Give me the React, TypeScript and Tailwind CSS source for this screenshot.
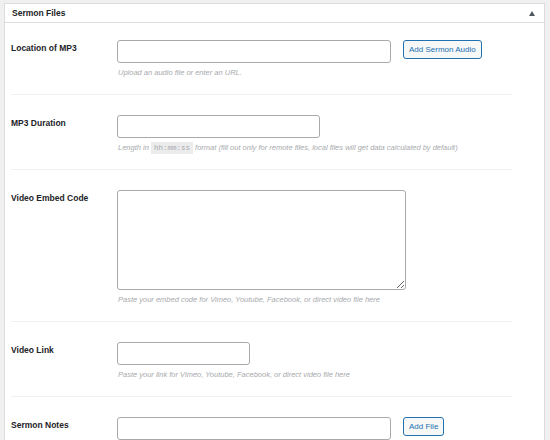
import React from "react";

type Field = {
  label: string;
  kind: "input" | "textarea";
  width: string;
  button?: string;
  help: React.ReactNode;
};

const fields: Field[] = [
  {
    label: "Location of MP3",
    kind: "input",
    width: "w-[274px]",
    button: "Add Sermon Audio",
    help: "Upload an audio file or enter an URL.",
  },
  {
    label: "MP3 Duration",
    kind: "input",
    width: "w-[203px]",
    help: (
      <>
        Length in{" "}
        <code className="not-italic bg-[#ececed] px-[3px] py-[2px] font-['Liberation_Mono',monospace] text-[7.5px]">
          hh:mm:ss
        </code>{" "}
        format (fill out only for remote files, local files will get data calculated by default)
      </>
    ),
  },
  {
    label: "Video Embed Code",
    kind: "textarea",
    width: "w-[289px]",
    help: "Paste your embed code for Vimeo, Youtube, Facebook, or direct video file here",
  },
  {
    label: "Video Link",
    kind: "input",
    width: "w-[133px]",
    help: "Paste your link for Vimeo, Youtube, Facebook, or direct video file here",
  },
  {
    label: "Sermon Notes",
    kind: "input",
    width: "w-[274px]",
    button: "Add File",
    help: "",
  },
];

const FieldRow = ({ field, first, last }: { field: Field; first: boolean; last: boolean }) => {
  return (
    <div
      className={`flex ${first ? "pt-[17px]" : "pt-[20px]"} ${last ? "" : "pb-[16px] border-b border-[#f0f0f1]"}`}
    >
      <div className="w-[106px] shrink-0 pt-[3px] text-[8.5px] leading-[11px] font-bold text-[#1d2327]">
        {field.label}
      </div>
      <div className="flex flex-col">
        <div className="flex items-start">
          {field.kind === "textarea" ? (
            <textarea
              className={`${field.width} h-[100px] rounded-[3px] border border-[#a7aaad] bg-white outline-none block`}
            />
          ) : (
            <input
              type="text"
              className={`${field.width} h-[23px] rounded-[3px] border border-[#a7aaad] bg-white outline-none`}
            />
          )}
          {field.button && (
            <button className="ml-[12px] h-[19px] px-[5px] rounded-[3px] border border-[#2271b1] bg-[#f6f7f7] text-[#2271b1] text-[8px] leading-none whitespace-nowrap">
              {field.button}
            </button>
          )}
        </div>
        {field.help && (
          <div className="mt-[5px] pl-[1px] text-[7.5px] leading-[10px] italic text-[#a7aaad] whitespace-nowrap">
            {field.help}
          </div>
        )}
      </div>
    </div>
  );
};

export default function App() {
  return (
    <div className="w-[550px] h-[440px] overflow-hidden bg-[#f0f0f1] pt-[3px] pl-[4px] font-['Liberation_Sans',Arial,sans-serif]">
      <div className="w-[541px] h-[460px] bg-white border border-[#dcdcde]">
        <div className="h-[19px] flex items-center justify-between pl-[7px] pr-[9px] border-b border-[#dcdcde]">
          <span className="text-[8.5px] font-bold text-[#1d2327]">Sermon Files</span>
          <svg width="6" height="5" viewBox="0 0 6 5">
            <path d="M3 0 L6 5 L0 5 Z" fill="#50575e" />
          </svg>
        </div>
        <div className="pl-[6px] pr-[32px]">
          {fields.map((f, i) => (
            <FieldRow key={f.label} field={f} first={i === 0} last={i === fields.length - 1} />
          ))}
        </div>
      </div>
    </div>
  );
}
